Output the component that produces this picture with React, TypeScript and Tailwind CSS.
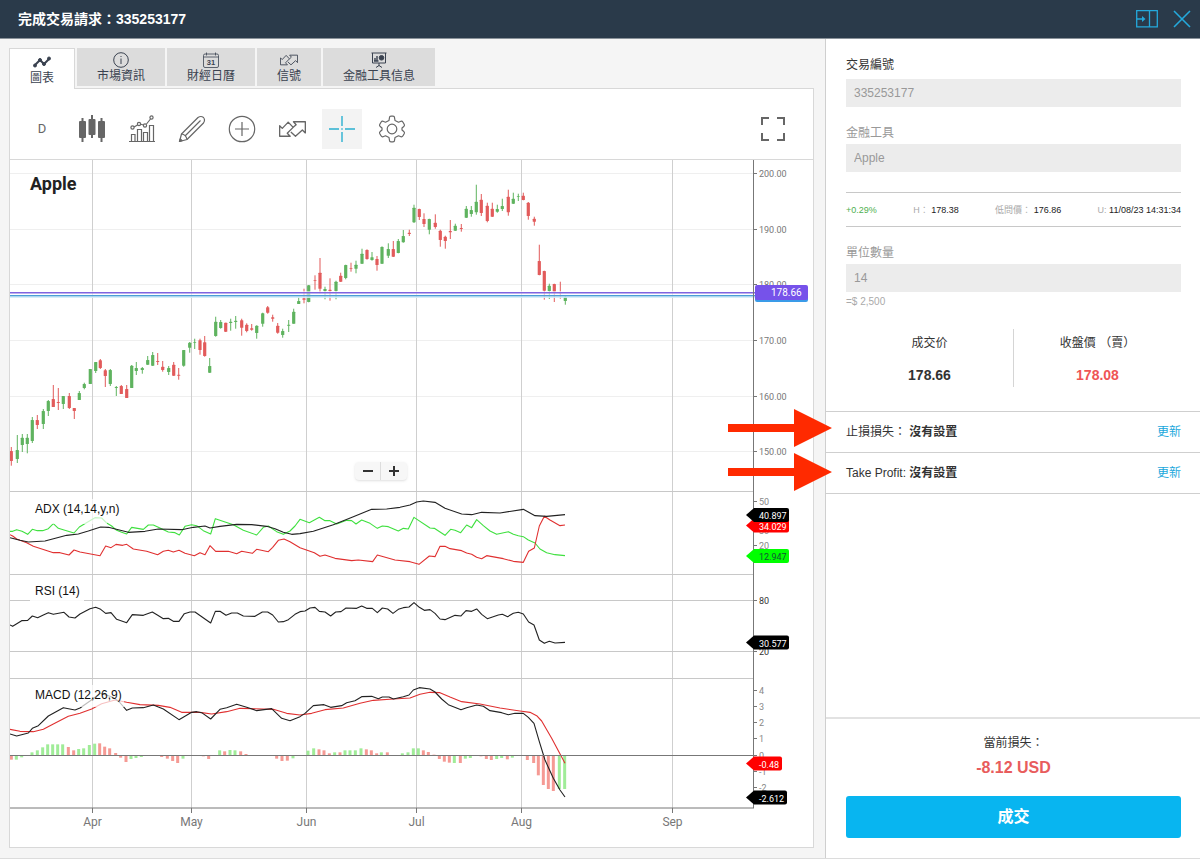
import type { ReactNode } from 'react'

type Candle = [x: number, high: number, top: number, bottom: number, low: number, up: 0 | 1]

const candles: Candle[] = [
  [11.3, 447, 451, 461, 465.7, 0], [17.3, 435, 450, 459, 463, 1], [22.3, 434, 437.7, 445, 452, 1], [27.3, 434, 437.7, 444, 453.3, 1],
  [32.3, 417, 420, 441, 443, 1], [37.3, 415, 420, 425, 429, 0], [43.3, 409, 411, 424, 429, 1], [48.3, 400, 401, 411, 416, 1],
  [53.3, 385, 399, 407, 407, 0], [58.3, 388, 402, 403, 410, 0], [63.3, 396, 396, 404, 409, 1], [69.3, 393, 396, 408, 409, 0],
  [74.3, 408, 408, 411, 419, 0], [79.3, 391, 393, 400, 400, 1], [84.3, 382.7, 384, 388, 389.3, 1], [90.3, 369, 369, 384, 384, 1],
  [95.7, 362, 362, 371, 373, 1], [100.3, 359, 360.3, 368, 369, 0], [105.3, 369, 370.3, 376, 387, 0], [110.3, 369, 370, 384, 386, 1],
  [116.3, 386, 387, 388, 396, 1], [121.3, 385, 386, 394, 394, 0], [126.7, 385, 389, 398, 398, 0], [131.7, 365, 365.7, 388, 388, 1],
  [136.3, 362, 368, 371, 375, 1], [142.3, 367, 368, 370, 373.7, 1], [147.7, 356, 360, 364.7, 365, 1], [152.7, 352, 355, 365.7, 366, 1],
  [157.7, 353, 361, 362, 365, 0], [162.7, 361, 366.7, 370, 371.7, 0], [168.7, 366, 368, 372, 375, 1], [173.7, 362, 364.7, 375.7, 376, 0],
  [178.7, 368, 374.7, 375.7, 379.7, 0], [183.7, 350, 350, 365.7, 366.7, 1], [189.7, 342, 342.7, 347.7, 352.7, 1], [194.7, 338.7, 342.3, 343, 349, 1],
  [200, 338.7, 340.3, 350, 354.7, 0], [204.7, 336, 342.3, 356, 356.7, 0], [209.7, 358, 366, 372.7, 373, 1], [215.7, 316.7, 321.7, 336, 336.7, 1],
  [220.7, 320, 322, 328, 328.7, 1], [225.7, 322.7, 322.7, 331.7, 332, 0], [230.7, 318.7, 321.7, 323, 330.7, 1], [235.7, 316, 320.7, 322, 328.7, 1],
  [241.7, 318.7, 320.3, 327.7, 335.7, 0], [246.7, 323.3, 324.7, 331, 332.3, 0], [251.7, 324, 328.3, 329.7, 330.7, 0], [256.7, 325.3, 325.7, 333, 338.7, 1],
  [262.7, 312.7, 313.3, 323.7, 326.7, 1], [267.7, 306, 307.3, 312.7, 313.7, 0], [272.7, 314.7, 317.3, 318.7, 321.7, 0], [277.7, 323, 325.7, 332.7, 333.7, 0],
  [282.7, 328.7, 331, 335, 337.7, 1], [288.7, 320, 324.7, 325.7, 332, 1], [293.7, 308.7, 311.7, 323.7, 323.7, 1], [298.7, 297.3, 301, 304, 304, 1],
  [304, 288.7, 298.3, 299.7, 303.3, 0], [308.7, 285, 285.3, 302, 302.3, 1], [315, 275.3, 280, 280.7, 289.7, 0], [320, 258, 272.7, 288.7, 293.3, 0],
  [325, 286.7, 289, 291, 299.3, 1], [330, 278.3, 289.7, 291, 300.7, 0], [336, 280.7, 281.7, 291, 299.3, 1], [340.7, 272.7, 275.7, 281.7, 282, 0],
  [345.7, 264.7, 265, 278, 279.3, 1], [351, 262.7, 268, 268.7, 271.7, 0], [356, 260.7, 264.7, 268.7, 273.3, 1], [362, 248.7, 253.7, 263.7, 264, 1],
  [367, 249.3, 250, 259, 259.7, 0], [372, 252, 257.3, 260, 260.7, 1], [377, 256, 259, 265, 270.7, 0], [382, 246.3, 247, 263.7, 264, 1],
  [388.3, 243.3, 249, 255.7, 258, 1], [393.3, 241, 249, 256.7, 257, 0], [398.3, 239, 241, 253, 253.3, 1], [403.3, 230, 236, 242.3, 242.7, 1],
  [409.3, 229.7, 232.7, 234, 236, 0], [414, 204.7, 207.7, 222.3, 223, 1], [419.3, 208.7, 209, 217, 220, 0], [424, 213.3, 219, 224, 227, 0],
  [429.3, 218.7, 219, 229.7, 234.3, 1], [435.3, 214.3, 222.7, 227, 228.7, 0], [440.3, 229.7, 230.7, 240, 246.7, 0], [445.3, 235.7, 236.7, 241, 248.7, 0],
  [450.3, 220, 231, 232.3, 239, 0], [455.3, 223.7, 225.7, 230.7, 231, 1], [461.3, 224, 228, 229, 231.7, 0], [466.3, 206, 208.7, 217.7, 218, 1],
  [471.3, 206, 210, 214, 216.7, 1], [476.3, 184.7, 201.7, 212.3, 214.7, 1], [481.3, 194, 199.7, 213, 216, 0], [487.3, 202.7, 205.7, 221, 222.3, 0],
  [492.3, 202.7, 208.7, 216.7, 217, 0], [497.3, 204.7, 209, 211.7, 212.7, 1], [502.3, 198.7, 206, 209, 211, 1], [508.3, 189.7, 196.7, 212.3, 215.7, 0],
  [513.3, 192.7, 198.7, 203.7, 204, 1], [518.3, 193.7, 196, 196.7, 201, 1], [523.3, 192.7, 195.7, 200, 200.3, 0], [528.3, 202, 202.7, 216, 219.7, 0],
  [534.3, 216.7, 218.7, 221.7, 225.7, 0], [539.3, 244.7, 261, 275, 275.3, 0], [544.3, 270.7, 271, 290.7, 299.7, 0], [549.3, 283.7, 285.7, 291, 299, 1],
  [554.3, 283.7, 284, 291.7, 302, 0], [560.3, 281.7, 292.3, 293.3, 298.7, 0], [565.3, 295.3, 297, 301, 304.7, 1],
]

// indicator lines are stored at 3x resolution, the groups scale them back down
const plusDi =
  '30,124 38,124 50,119 66,124 83,133 97,118 112,122 128,122 145,116 160,101 175,115 192,120 222,129 238,111 258,99 285,83 305,84 320,99 335,108 350,121 365,127 380,132 395,112 430,118 445,105 460,105 475,112 505,126 525,128 538,135 555,109 575,104 590,107 610,122 632,132 646,86 700,104 730,121 770,135 790,112 805,108 830,125 850,133 870,123 885,108 900,88 928,98 958,82 975,92 990,92 1010,102 1040,91 1055,92 1068,102 1085,90 1110,100 1132,115 1147,108 1165,110 1195,123 1210,115 1225,117 1242,82 1290,114 1303,115 1335,136 1352,118 1365,121 1382,128 1400,105 1415,113 1430,89 1450,107 1470,123 1490,133 1525,125 1540,133 1555,137 1570,140 1585,150 1605,159 1620,177 1640,188 1665,194 1695,197'
const minusDi =
  '30,134 38,138 50,147 80,158 100,169 160,188 180,188 207,195 222,180 240,186 300,197 317,168 333,173 348,163 368,166 380,163 400,177 440,184 473,194 490,184 505,181 520,186 537,181 555,190 583,197 600,188 615,194 630,167 647,184 685,184 710,191 725,184 757,190 770,178 805,185 818,172 835,151 852,147 870,155 900,173 943,188 960,199 975,195 1005,205 1055,212 1075,210 1118,215 1132,195 1185,210 1230,215 1257,223 1288,198 1305,200 1320,169 1335,169 1350,176 1385,182 1400,189 1415,193 1430,202 1445,206 1460,197 1510,206 1540,214 1570,217 1586,184 1603,174 1618,108 1633,79 1650,90 1680,107 1695,105'
const adx =
  '30,143 60,151 85,156 135,153 200,136 235,132 265,123 302,111 325,112 355,119 385,127 435,124 475,117 545,119 580,112 615,108 630,114 660,109 710,103 755,104 800,109 825,116 850,127 875,133 900,131 940,124 1000,104 1060,80 1115,58 1160,57 1200,52 1230,45 1250,36 1270,33 1305,37 1335,55 1385,72 1415,74 1445,67 1500,69 1570,58 1605,77 1640,79 1695,74'
const rsi =
  '30,405 38,409 65,392 83,391 97,378 113,383 130,375 145,368 160,373 192,367 207,381 225,384 240,372 270,356 287,352 302,358 317,370 333,368 350,388 380,398 397,374 430,376 457,366 472,375 490,386 505,385 520,394 537,394 553,371 570,366 585,366 632,399 646,364 660,364 678,376 695,369 712,369 730,378 765,379 787,366 803,366 818,375 835,396 850,395 865,389 885,373 900,365 915,363 930,354 945,352 958,364 975,366 992,378 1007,366 1023,365 1038,354 1070,355 1085,348 1100,355 1117,355 1132,368 1147,354 1163,357 1179,370 1195,358 1210,353 1227,351 1242,338 1258,352 1273,361 1290,359 1305,370 1320,387 1335,389 1365,376 1383,378 1398,362 1415,364 1430,357 1445,373 1462,386 1495,375 1507,373 1523,380 1540,370 1555,367 1570,372 1586,396 1602,405 1618,450 1633,460 1648,454 1665,459 1695,457'
const macd =
  '30,192 50,198 85,189 97,175 115,167 145,138 190,113 225,120 240,114 270,93 300,70 340,82 358,96 380,121 397,114 430,113 460,105 490,117 537,149 575,127 590,125 605,128 632,147 660,118 680,113 710,103 740,112 770,122 815,116 845,145 870,152 900,140 915,130 940,107 972,104 992,112 1025,107 1040,98 1065,92 1085,80 1115,79 1135,86 1147,81 1167,81 1180,87 1210,80 1227,75 1240,60 1258,53 1290,57 1305,66 1325,87 1345,104 1383,119 1400,113 1430,105 1450,109 1470,122 1505,128 1525,134 1545,130 1570,130 1585,142 1602,160 1618,215 1635,270 1660,325 1680,360 1695,381'
const macdSignal =
  '30,178 60,184 100,185 130,178 160,162 205,139 240,130 275,117 305,101 345,90 380,97 420,104 475,106 510,112 545,127 600,127 635,132 680,125 720,115 820,118 860,130 900,135 935,130 975,119 1030,114 1080,100 1120,91 1180,87 1230,84 1260,73 1290,67 1320,68 1350,81 1385,95 1440,102 1500,114 1560,123 1590,127 1610,137 1625,153 1655,205 1695,280'

// [x, height, rising]
const histogram = [
  [34, -13, 0], [49, -13, 1], [65, -6, 1], [80, -1, 1], [96, 9, 1], [112, 15, 1], [128, 24, 1], [143, 33, 1], [158, 33, 1], [173, 33, 1],
  [188, 33, 1], [205, 25, 0], [221, 15, 0], [236, 19, 1], [251, 21, 1], [268, 31, 1], [284, 35, 1], [299, 36, 0], [314, 26, 0], [329, 21, 0],
  [347, 7, 0], [362, -7, 0], [378, -20, 0], [393, -11, 1], [408, -8, 1], [424, -5, 1], [485, -5, 0], [502, -10, 0], [518, -17, 0], [533, -23, 0],
  [549, -10, 1], [610, -3, 0], [626, -11, 0], [659, 15, 1], [674, 12, 0], [690, 16, 1], [705, 15, 1], [722, 12, 0], [738, 4, 0], [830, -10, 0],
  [846, -17, 0], [862, -16, 0], [879, -9, 1], [924, 14, 1], [941, 21, 1], [957, 18, 0], [972, 15, 0], [988, 6, 0], [1004, 9, 1], [1020, 9, 0],
  [1035, 15, 1], [1050, 15, 1], [1066, 15, 1], [1083, 21, 1], [1099, 18, 0], [1114, 15, 0], [1130, 6, 0], [1144, 9, 1], [1162, 9, 0],
  [1207, 6, 1], [1224, 9, 1], [1240, 21, 1], [1255, 21, 1], [1270, 15, 0], [1285, 10, 0], [1302, 2, 0], [1318, -11, 0], [1333, -19, 0],
  [1348, -22, 0], [1363, -23, 1], [1381, -23, 0], [1396, -10, 1], [1411, -8, 1], [1443, -3, 0], [1459, -11, 0], [1474, -14, 0], [1490, -11, 1],
  [1505, -8, 1], [1522, -12, 0], [1537, -7, 1], [1582, -14, 0], [1601, -23, 0], [1615, -60, 0], [1630, -89, 0], [1645, -101, 0],
  [1660, -107, 0], [1678, -101, 1], [1694, -101, 1],
]

const months: [number, string][] = [
  [92.5, 'Apr'], [191.5, 'May'], [306.5, 'Jun'], [416.5, 'Jul'], [521.5, 'Aug'], [672.5, 'Sep'],
]

const prices: [number, string][] = [
  [173.5, '200.00'], [229.5, '190.00'], [284.5, '180.00'], [340.5, '170.00'], [396.5, '160.00'], [451.5, '150.00'],
]

const indicatorTicks: [number, string, boolean][] = [
  [501.5, '50', false], [530.5, '30', false], [545.5, '20', false], [600.5, '80', true], [651.5, '20', true],
  [690.5, '4', false], [706.5, '3', false], [722.5, '2', false], [738.5, '1', false], [755.5, '0', false], [771.5, '-1', false], [787.5, '-2', false],
]

const badges: [number, string, string, string, number][] = [
  [525.5, '34.029', '#ff0000', '#fff', 36],
  [515, '40.897', '#000', '#fff', 36],
  [556, '12.947', '#00ff00', '#153', 36],
  [642.5, '30.577', '#000', '#fff', 36],
  [763.5, '-0.48', '#ff0000', '#fff', 29],
  [797.5, '-2.612', '#000', '#fff', 34],
]

const SignalIcon = ({ className }: { className: string }) => (
  <svg viewBox="0 0 82 48" fill="none" stroke="currentColor" strokeWidth="4" strokeLinejoin="round" className={className}>
    <path d="M2 14V46H34L25 37L43 19L28 3L10 22Z" />
    <path d="M43 19L52 11L44 2H80V36L71 27L50 46L36 33" />
  </svg>
)

const tabs: { label: string; icon: ReactNode }[] = [
  {
    label: '圖表',
    icon: (
      <svg viewBox="0 0 18 16" className="h-4 w-[18px]" fill="currentColor" stroke="currentColor">
        <path d="M2 11L7 6L11 10L16 5" fill="none" strokeWidth="2" />
        <circle cx="2" cy="11.500" r="1.500" /><circle cx="7" cy="6" r="1.500" /><circle cx="11" cy="10" r="1.500" /><circle cx="16" cy="4.500" r="1.500" />
      </svg>
    ),
  },
  {
    label: '市場資訊',
    icon: (
      <svg viewBox="0 0 16 16" className="size-4" fill="none" stroke="currentColor">
        <circle cx="8" cy="8" r="7.300" />
        <path d="M8 6.500V12M8 4V5" />
      </svg>
    ),
  },
  {
    label: '財經日曆',
    icon: (
      <svg viewBox="0 0 16 16" className="size-4" fill="none" stroke="currentColor" strokeWidth=".8">
        <rect x=".5" y="2" width="15" height="13.500" rx="1.500" />
        <path d="M.5 5H15.500M3.500 .5V3.500M12.500 .5V3.500" />
        <text x="8" y="12.800" textAnchor="middle" fontSize="7.500" fontWeight="700" stroke="none" fill="currentColor">31</text>
      </svg>
    ),
  },
  { label: '信號', icon: <SignalIcon className="h-4 w-[18px]" /> },
  {
    label: '金融工具信息',
    icon: (
      <svg viewBox="0 0 16 16" className="size-4" fill="none" stroke="currentColor">
        <path d="M.5 1H15.500M1.500 1V11H14.500V1M8 11V14M5 15.500L8 13.500L11 15.500" />
        <circle cx="10.500" cy="5.800" r="2.300" fill="currentColor" />
        <path d="M4 9V6M6 9V4M3 9H7.500" strokeWidth="1.400" />
      </svg>
    ),
  },
]

const tools: { label: string; icon: ReactNode; active?: boolean }[] = [
  { label: 'Interval', icon: <span className="font-['Roboto',sans-serif] text-[13px]">D</span> },
  {
    label: 'Chart type',
    icon: (
      <svg viewBox="0 0 26 28" className="h-7 w-[26px]" fill="currentColor">
        <rect x="0" y="6" width="7" height="17" rx="1" /><rect x="2.500" y="3" width="2" height="24" />
        <rect x="9.500" y="4" width="7" height="16" rx="1" /><rect x="12" y="0" width="2" height="23" />
        <rect x="19" y="6" width="7" height="17" rx="1" /><rect x="21.500" y="3" width="2" height="24" />
      </svg>
    ),
  },
  {
    label: 'Indicators',
    icon: (
      <svg viewBox="0 0 26 28" className="h-7 w-[26px]" fill="none" stroke="currentColor" strokeWidth="1.200">
        <path d="M0 26.500H26M2.500 26.500V19.500H6V26.500M8.500 26.500V14.500H12.500V26.500M14.500 26.500V17.500H18.500V26.500M20.500 26.500V10.500H24.500V26.500" />
        <path d="M5 12L8.500 10M11 9L14.500 10M17.500 9L21.500 4" />
        <circle cx="3.500" cy="12.500" r="1.600" /><circle cx="10" cy="9" r="1.600" /><circle cx="16" cy="10.500" r="1.600" /><circle cx="22.500" cy="2.500" r="1.600" />
      </svg>
    ),
  },
  {
    label: 'Draw',
    icon: (
      <svg viewBox="0 0 28 28" className="size-7" fill="none" stroke="currentColor" strokeWidth="1.200" strokeLinejoin="round">
        <path d="M1.500 26.500L3.500 19L20 2.500Q23 .5 25.500 2.500Q27.500 5 25.500 8L9 24.500Z" />
        <path d="M3.500 19Q8 19.500 9 24.500M22.500 5.500L7 21" />
        <path d="M1.500 26.500L2.300 23.800L4.200 25.700Z" fill="currentColor" />
      </svg>
    ),
  },
  {
    label: 'Add',
    icon: (
      <svg viewBox="0 0 28 28" className="size-7" fill="none" stroke="currentColor" strokeWidth="1.200">
        <circle cx="14" cy="14" r="12.700" />
        <path d="M7 14H21M14 7V21" />
      </svg>
    ),
  },
  { label: 'Signals', icon: <SignalIcon className="h-4 w-[27px]" /> },
  {
    label: 'Crosshair',
    active: true,
    icon: (
      <svg viewBox="0 0 28 28" className="size-7" stroke="#2bb0d0" strokeWidth="1.400">
        <path d="M1 14H11M17 14H27M14 1V11M14 17V27M13.300 14H14.700" />
      </svg>
    ),
  },
  {
    label: 'Settings',
    icon: (
      <svg viewBox="0 0 28 28" className="size-7" fill="none" stroke="currentColor" strokeWidth="1.200" strokeLinejoin="round">
        <path d="M11.500 2.500Q11.500 1.200 13 1.200H15Q16.500 1.200 16.500 2.500L17 5.500L20.500 7.200L23 6.200Q24.300 6 25 7.200L26.300 9.500Q26.800 10.800 25.800 11.500L24 13V15L25.800 16.500Q26.800 17.200 26.300 18.500L25 20.800Q24.300 22 23 21.800L20.500 20.800L17 22.500L16.500 25.500Q16.500 26.800 15 26.800H13Q11.500 26.800 11.500 25.500L11 22.500L7.500 20.800L5 21.800Q3.700 22 3 20.800L1.700 18.500Q1.200 17.200 2.200 16.500L4 15V13L2.200 11.500Q1.200 10.800 1.700 9.500L3 7.200Q3.700 6 5 6.200L7.500 7.200L11 5.500Z" />
        <circle cx="14" cy="14" r="4.800" />
      </svg>
    ),
  },
]

const Line = ({ points, color }: { points: string; color: string }) => (
  <polyline points={points} fill="none" stroke={color} strokeWidth="1.1" strokeLinejoin="round" vectorEffect="non-scaling-stroke" />
)

const PriceChart = () => (
  <svg viewBox="10 160 803 687" className="block h-auto w-full font-['Roboto',sans-serif]" role="img" aria-label="Apple">
    {prices.map(([y]) => <path key={y} d={`M10 ${y}H753`} stroke="#efefef" />)}
    {months.map(([x]) => <path key={x} d={`M${x} 160V808`} stroke="#cfcfcf" />)}
    <path d="M10 491.500H753M10 574.500H753M10 600.500H753M10 651.500H753M10 678.500H753" stroke="#c8c8c8" />

    {candles.map(([x, high, top, bottom, low, up]) => (
      <g key={x} fill={up ? '#5fb35f' : '#e25b5b'}>
        <rect x={x - 0.5} y={high} width="1" height={low - high} />
        <rect x={x - 1.6} y={top} width="3.2" height={bottom - top} rx=".5" />
      </g>
    ))}

    <rect x="10" y="291" width="743" height="7" fill="#fff" opacity=".6" />
    <path d="M10 292.800H755" stroke="#8064e0" strokeWidth="1.500" />
    <path d="M10 295.700H755" stroke="#4a9fd6" strokeWidth="1.500" />
    <path d="M10 297.200H755" stroke="#c5e6f8" />

    <g transform="translate(0 490) scale(.33333)">
      <Line points={plusDi} color="#3fe03f" />
      <Line points={minusDi} color="#e03030" />
      <Line points={adx} color="#222" />
      <Line points={rsi} color="#222" />
    </g>
    <g transform="translate(0 670) scale(.33333)">
      {histogram.map(([x, h, up]) => (
        <rect key={x} x={x - 4.5} y={h > 0 ? 256 - h : 256} width="9" height={Math.abs(h)} fill={up ? '#a0ec98' : '#f59a94'} />
      ))}
      <Line points={macdSignal} color="#e03030" />
      <Line points={macd} color="#222" />
    </g>
    <path d="M10 755.500H753" stroke="#777" />

    <g className="font-['Liberation_Sans',sans-serif]" fontSize="12" fill="#111">
      <rect x="30" y="499" width="77" height="25" fill="#fff" opacity=".7" />
      <rect x="30" y="582" width="54" height="20" fill="#fff" opacity=".9" />
      <rect x="30" y="685" width="94" height="22" fill="#fff" opacity=".7" />
      <text x="35" y="513">ADX (14,14,y,n)</text>
      <text x="35" y="595">RSI (14)</text>
      <text x="35" y="699">MACD (12,26,9)</text>
    </g>
    <text x="30" y="190" fontSize="18" fontWeight="700" fill="#222">Apple</text>

    <path d="M753.500 160V808M10 808H754" fill="none" stroke="#777" />
    {months.map(([x, label]) => (
      <g key={label}>
        <path d={`M${x} 808V813`} stroke="#777" />
        <text x={x} y="826" textAnchor="middle" fontSize="12" fill="#777">{label}</text>
      </g>
    ))}
    {prices.map(([y, label]) => (
      <g key={label}>
        <path d={`M754 ${y}H757`} stroke="#777" />
        <text x="759" y={y + 3} fontSize="9" fill="#777">{label}</text>
      </g>
    ))}
    {indicatorTicks.map(([y, label, dark]) => (
      <g key={y}>
        <path d={`M754 ${y}H757`} stroke="#777" />
        <text x="759" y={y + 3} fontSize="9" fill={dark ? '#333' : '#888'}>{label}</text>
      </g>
    ))}
    {badges.map(([y, label, fill, color, width]) => (
      <g key={label}>
        <path d={`M746 ${y}L754 ${y - 7}H${751 + width}Q${753 + width} ${y - 7} ${753 + width} ${y - 5}V${y + 5}Q${753 + width} ${y + 7} ${751 + width} ${y + 7}H754Z`} fill={fill} />
        <text x="759" y={y + 4} fontSize="9" fill={color}>{label}</text>
      </g>
    ))}
    <rect x="755" y="288" width="53" height="14" rx="2" fill="#3a9be8" />
    <rect x="755" y="285" width="53" height="15" rx="2" fill="#7652ea" />
    <text x="771" y="296" fontSize="10" fill="#fff">178.66</text>
  </svg>
)

const inputClass = 'block h-7 w-full bg-[#ececec] px-2 text-xs text-[#999] outline-none'

const OrderPanel = () => (
  <aside className="flex w-[375px] shrink-0 flex-col border-l border-[#cfcfcf] bg-white text-xs text-[#333]">
    <div className="pt-[18px] pr-[19px] pl-5">
      <label htmlFor="trade-id" className="mb-1.5 block leading-4">交易編號</label>
      <input id="trade-id" readOnly value="335253177" className={inputClass} />

      <label htmlFor="instrument" className="mt-[18px] mb-[3px] block leading-4 text-[#999]">金融工具</label>
      <input id="instrument" readOnly value="Apple" className={inputClass} />

      <div className="mt-5 flex h-[35px] items-center justify-between border-y border-[#c8c8c8] text-[9px] text-[#aaa]">
        <span className="text-[#4fb04f]">+0.29%</span>
        <span>H： <b className="font-normal text-[#222]">178.38</b></span>
        <span>低問價： <b className="font-normal text-[#222]">176.86</b></span>
        <span>U: <b className="font-normal text-[#222]">11/08/23 14:31:34</b></span>
      </div>

      <label htmlFor="units" className="mt-[18px] mb-[3px] block leading-4 text-[#999]">單位數量</label>
      <input id="units" readOnly value="14" className={inputClass} />
      <p className="text-[10px] leading-5 text-[#aaa]">=$ 2,500</p>

      <div className="mt-[17px] mb-6 flex h-[58px] text-center">
        <div className="flex-1 border-r border-[#d5d5d5] pt-1.5">
          <p className="leading-4">成交价</p>
          <p className="mt-3.5 text-sm leading-5 font-bold">178.66</p>
        </div>
        <div className="flex-1 pt-1.5">
          <p className="leading-4">收盤價 （賣）</p>
          <p className="mt-3.5 text-sm leading-5 font-bold text-[#ef5555]">178.08</p>
        </div>
      </div>
    </div>

    <div className="relative border-b border-[#cfcfcf]">
      <svg viewBox="0 0 104 82" className="absolute -top-0.5 -left-[98px] h-[82px] w-[104px]" fill="#ff2a00">
        <path d="M0 15H66V0L104 19L66 38V23H0ZM0 59H66V44L104 63L66 82V67H0Z" />
      </svg>
      <div className="flex h-[41px] items-center justify-between border-t border-[#cfcfcf] pr-[19px] pl-5">
        <span>止損損失： <b>沒有設置</b></span>
        <a href="#stop-loss" className="text-[#1ba8dc]">更新</a>
      </div>
      <div className="flex h-[41px] items-center justify-between border-t border-[#cfcfcf] pr-[19px] pl-5">
        <span>Take Profit: <b>沒有設置</b></span>
        <a href="#take-profit" className="text-[#1ba8dc]">更新</a>
      </div>
    </div>

    <div className="mt-auto border-t-2 border-[#e2e2e2] pt-4 pr-[19px] pb-5 pl-5 text-center">
      <p className="leading-4">當前損失：</p>
      <p className="mt-[5px] mb-4 text-base leading-6 font-bold text-[#e85c5c]">-8.12 USD</p>
      <button className="block h-[42px] w-full rounded-[3px] bg-[#08b5f0] text-base font-bold text-white">成交</button>
    </div>
  </aside>
)

const App = () => {
  return (
    <div className="flex min-h-screen flex-col border-b border-[#dcdcdc] bg-[#f5f5f5] font-['Liberation_Sans','Noto_Sans_CJK_TC',sans-serif]">
      <header className="flex h-[39px] items-center justify-between border-b border-[#8a929a] bg-[#2a3a4a] pr-[9px] pl-[18px]">
        <h1 className="text-sm font-bold text-white">完成交易請求：335253177</h1>
        <div className="flex items-center gap-[15px] text-[#24a9dc]">
          <button aria-label="Dock">
            <svg viewBox="0 0 22 18" className="block h-[18px] w-[22px]" fill="none" stroke="currentColor" strokeWidth="1.300">
              <path d="M.7 .7H21.300V16.800H.7ZM13.500 .7V16.800M1 9H7" />
              <path d="M6 6L9.500 9L6 12Z" fill="currentColor" stroke="none" />
            </svg>
          </button>
          <button aria-label="Close">
            <svg viewBox="0 0 18 18" className="block size-[18px]" stroke="currentColor" strokeWidth="1.600">
              <path d="M1 1L17 17M17 1L1 17" />
            </svg>
          </button>
        </div>
      </header>

      <div className="flex flex-1">
        <main className="min-w-0 flex-1 pt-[9px] pr-[11px] pb-2.5 pl-[9px]">
          <div className="relative -mb-px flex h-[41px] items-start gap-0.5" role="tablist">
            {tabs.map((tab, i) => (
              <button
                key={tab.label}
                role="tab"
                aria-selected={i === 0}
                className={
                  i === 0
                    ? 'flex h-[41px] flex-col items-center border border-b-0 border-[#d8d8d8] bg-white px-5 pt-[5px] text-xs leading-4 text-[#3a4250]'
                    : 'flex h-[38px] flex-col items-center bg-[#dcdcdc] px-5 pt-1 text-xs leading-4 text-[#3a4250]'
                }
              >
                {tab.icon}
                {tab.label}
              </button>
            ))}
          </div>

          <div className="border border-[#d8d8d8] bg-white">
            <div className="flex h-[71px] items-start justify-between border-b border-[#d8d8d8] pt-5 pr-5 pl-3 text-[#666]">
              <div className="flex gap-2.5">
                {tools.map((tool) => (
                  <button
                    key={tool.label}
                    aria-label={tool.label}
                    className={tool.active ? 'flex size-10 items-center justify-center bg-[#f3f3f3]' : 'flex size-10 items-center justify-center'}
                  >
                    {tool.icon}
                  </button>
                ))}
              </div>
              <button aria-label="Full screen" className="flex size-10 items-center justify-center">
                <svg viewBox="0 0 24 24" className="size-6" fill="none" stroke="currentColor" strokeWidth="2">
                  <path d="M1 8V1H8M16 1H23V8M23 16V23H16M8 23H1V16" />
                </svg>
              </button>
            </div>

            <div className="relative">
              <PriceChart />
              <div className="absolute top-[44%] left-[43%] flex h-[18px] rounded-sm bg-[#f7f7f7] text-[#333] shadow-sm">
                <button aria-label="Zoom out" className="flex w-[26px] items-center justify-center border-r border-[#ddd]">
                  <svg viewBox="0 0 10 10" className="size-2.5" stroke="currentColor" strokeWidth="2"><path d="M0 5H10" /></svg>
                </button>
                <button aria-label="Zoom in" className="flex w-[26px] items-center justify-center">
                  <svg viewBox="0 0 10 10" className="size-2.5" stroke="currentColor" strokeWidth="2"><path d="M0 5H10M5 0V10" /></svg>
                </button>
              </div>
            </div>
          </div>
        </main>

        <OrderPanel />
      </div>
    </div>
  )
}

export default App
